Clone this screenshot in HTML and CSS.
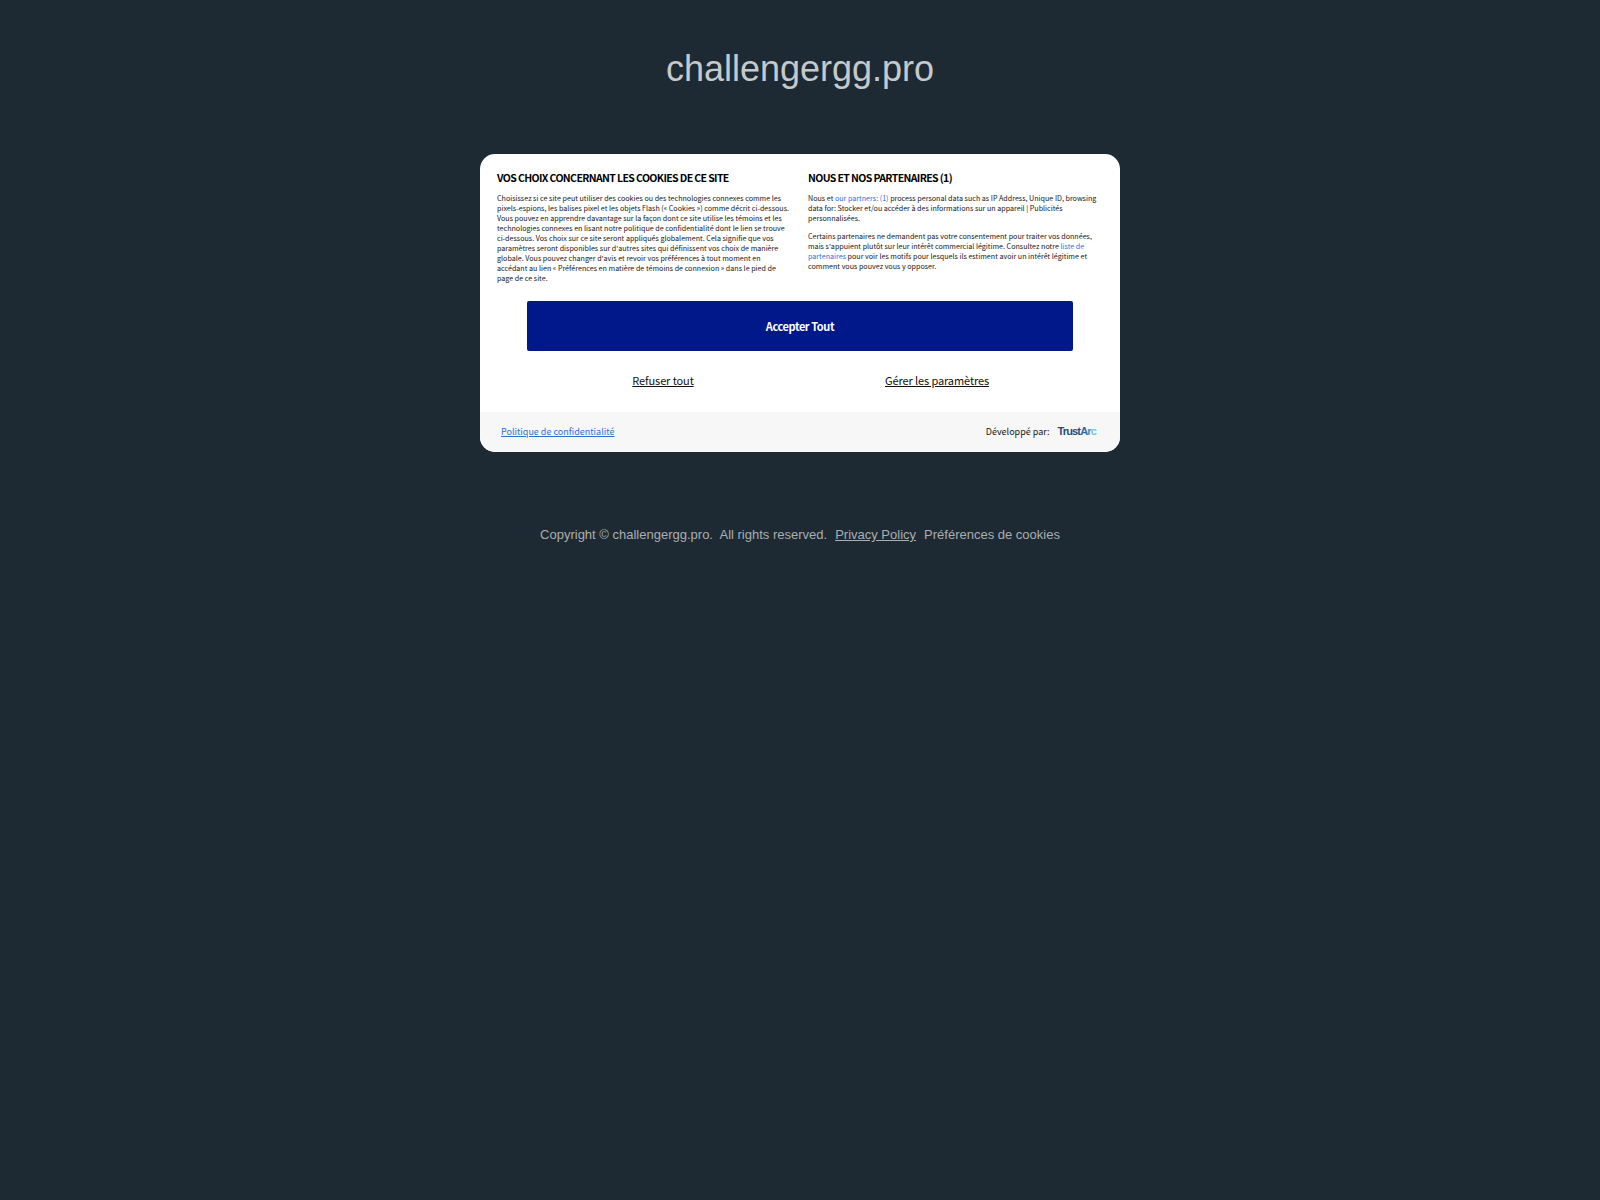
FILE: index.html
```html
<!DOCTYPE html>
<html lang="fr">
<head>
<meta charset="utf-8">
<title>challengergg.pro</title>
<link rel="stylesheet" href="styles.css">
</head>
<body>
<h1 class="site-title">challengergg.pro</h1>
<main class="card">
  <div class="columns">
    <section class="col">
      <h2>VOS CHOIX CONCERNANT LES COOKIES DE CE SITE</h2>
      <p>Choisissez si ce site peut utiliser des cookies ou des technologies connexes comme les pixels-espions, les balises pixel et les objets Flash (« Cookies ») comme décrit ci-dessous. Vous pouvez en apprendre davantage sur la façon dont ce site utilise les témoins et les technologies connexes en lisant notre politique de confidentialité dont le lien se trouve ci-dessous. Vos choix sur ce site seront appliqués globalement. Cela signifie que vos paramètres seront disponibles sur d'autres sites qui définissent vos choix de manière globale. Vous pouvez changer d'avis et revoir vos préférences à tout moment en accédant au lien « Préférences en matière de témoins de connexion » dans le pied de page de ce site.</p>
    </section>
    <section class="col">
      <h2>NOUS ET NOS PARTENAIRES (1)</h2>
      <p>Nous et <a class="blue" href="#">our partners: (1)</a> process personal data such as IP Address, Unique ID, browsing data for: Stocker et/ou accéder à des informations sur un appareil | Publicités personnalisées.</p>
      <p>Certains partenaires ne demandent pas votre consentement pour traiter vos données, mais s'appuient plutôt sur leur intérêt commercial légitime. Consultez notre <a class="blue" href="#">liste de partenaires</a> pour voir les motifs pour lesquels ils estiment avoir un intérêt légitime et comment vous pouvez vous y opposer.</p>
    </section>
  </div>
  <button class="accept">Accepter Tout</button>
  <div class="secondary">
    <a href="#">Refuser tout</a>
    <a href="#">Gérer les paramètres</a>
  </div>
  <footer class="card-foot">
    <a href="#">Politique de confidentialité</a>
    <div class="powered"><span>Développé par:</span><span class="logo">Trust<span class="logo-a">A</span><span class="logo-r">r</span><span class="logo-c">c</span></span></div>
  </footer>
</main>
<p class="copyright"><span>Copyright © challengergg.pro.&nbsp; All rights reserved.</span><a href="#">Privacy Policy</a><span>Préférences de cookies</span></p>
</body>
</html>
```
FILE: styles.css
```css
html, body { margin: 0; padding: 0; }
body {
  background: #1d2a33;
  min-height: 1200px;
  display: flex;
  flex-direction: column;
  align-items: center;
  font-family: "Liberation Sans", Arial, sans-serif;
}
.site-title {
  margin: 48px 0 0;
  font-size: 36px;
  line-height: 42px;
  font-weight: 400;
  color: #c6c9cb;
}
.card {
  box-sizing: border-box;
  width: 640px;
  height: 298px;
  margin-top: 64px;
  background: #fff;
  border-radius: 15px;
  overflow: hidden;
  display: flex;
  flex-direction: column;
  font-family: "Noto Sans CJK JP", "Noto Sans", sans-serif;
  color: #161616;
}
.columns {
  display: grid;
  grid-template-columns: 295px 295px;
  column-gap: 16px;
  padding: 17px 17px 0;
  height: 130px;
  box-sizing: content-box;
}
.col h2 {
  margin: 0 0 8px;
  font-size: 10.5px;
  line-height: 14px;
  font-weight: 700;
  color: #000;
  letter-spacing: -0.62px;
}
.col p {
  margin: 0 0 8px;
  font-size: 7.15px;
  line-height: 10px;
  color: #161616;
}
.blue { color: #2a6fd6; text-decoration: none; }
.accept {
  align-self: center;
  width: 546px;
  height: 50px;
  padding: 0;
  border: 0;
  border-radius: 2px;
  background: #00188a;
  color: #fff;
  font: 700 11px/14px "Noto Sans CJK JP", "Noto Sans", sans-serif;
  letter-spacing: -0.42px;
}
.secondary {
  display: grid;
  grid-template-columns: 274px 274px;
  justify-content: center;
  justify-items: center;
  padding-top: 21px;
  height: 40px;
  box-sizing: content-box;
}
.secondary a {
  color: #111;
  font-size: 11px;
  line-height: 16px;
  height: 16px;
  letter-spacing: -0.11px;
}
.card-foot {
  flex: 1;
  background: #f7f7f7;
  display: flex;
  align-items: center;
  justify-content: space-between;
  padding: 0 24px 2px 21px;
  font-size: 9px;
}
.card-foot > a { color: #2a6fd6; }
.powered { display: flex; align-items: center; gap: 8px; color: #161616; }
.logo { font: 700 11px/12px "Liberation Sans", sans-serif; letter-spacing: -0.85px; color: #1d4f7c; }
.logo-a { color: #2d6a9a; }
.logo-r { color: #3f8fc0; }
.logo-c { color: #6fc3dc; }
.copyright {
  margin: 75px 0 0;
  font-size: 13px;
  line-height: 16px;
  color: #a9aeb1;
  display: flex;
  gap: 8px;
}
.copyright a { color: #a9aeb1; }
```
